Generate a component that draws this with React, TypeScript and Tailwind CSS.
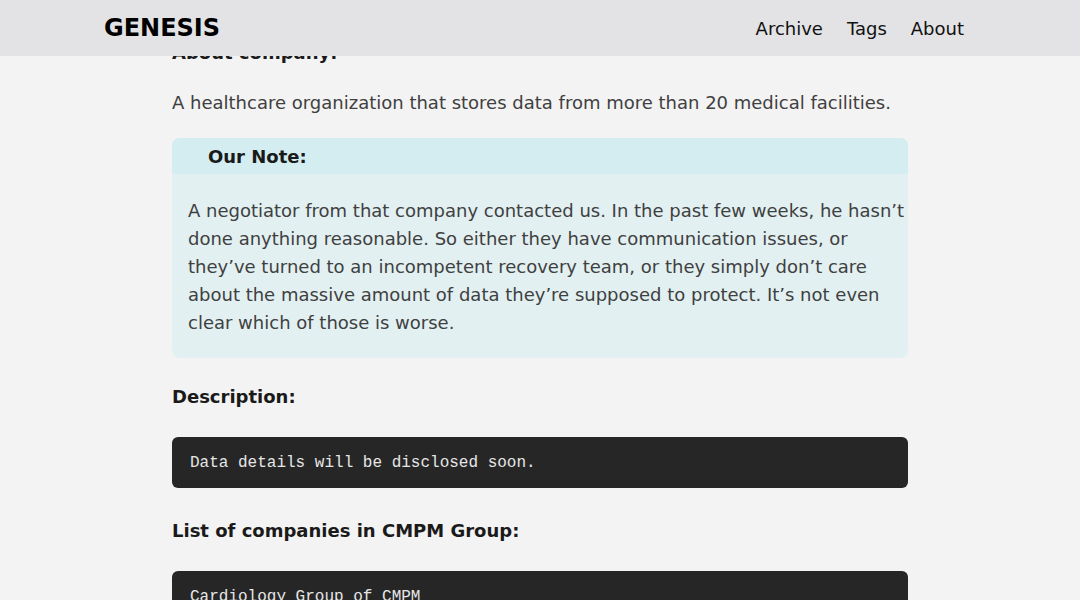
import React from 'react';

const noteLines = [
  'A negotiator from that company contacted us. In the past few weeks, he hasn\u2019t',
  'done anything reasonable. So either they have communication issues, or',
  'they\u2019ve turned to an incompetent recovery team, or they simply don\u2019t care',
  'about the massive amount of data they\u2019re supposed to protect. It\u2019s not even',
  'clear which of those is worse.',
];

const App: React.FC = () => {
  return (
    <div className="relative h-[600px] overflow-hidden bg-[#f3f3f3] font-['DejaVu_Sans',sans-serif]">
      {/* fixed header over the scrolled content */}
      <header className="absolute top-0 left-0 right-0 z-10 h-14 bg-[#e3e3e5]">
        <div className="ml-[104px] flex h-full w-[860px] items-center justify-between">
          <span className="text-[24px] font-bold text-black leading-none">GENESIS</span>
          <nav className="flex gap-6 text-[18px] text-[#111]">
            <span>Archive</span>
            <span>Tags</span>
            <span>About</span>
          </nav>
        </div>
      </header>

      <main className="mx-auto w-[736px] pt-[39px] text-[18px] leading-[28px]">
        <h3 className="font-bold text-[#1a1a1a]">About company:</h3>
        <p className="mt-[22px] text-[#404040]">
          A healthcare organization that stores data from more than 20 medical facilities.
        </p>

        <div className="mt-[21px] overflow-hidden rounded-lg bg-[#e2f0f2]">
          <div className="flex h-9 items-center bg-[#d3edf0] pl-9 pt-px font-bold text-[#1a1a1a]">Our Note:</div>
          <p className="pt-[23px] pb-[21px] pl-4 pr-1 text-[#404040] whitespace-nowrap">
            {noteLines.map((l, i) => (
              <span key={i} className="block">{l}</span>
            ))}
          </p>
        </div>

        <h3 className="mt-[25px] font-bold text-[#1a1a1a]">Description:</h3>
        <pre className="mt-[26px] rounded-md bg-[#262626] px-[18px] pt-[17px] pb-[15px] font-['Liberation_Mono',monospace] text-[16px] leading-[19px] text-[#e6e6e6]">
          Data details will be disclosed soon.
        </pre>

        <h3 className="mt-[29px] font-bold text-[#1a1a1a]">List of companies in CMPM Group:</h3>
        <pre className="mt-[26px] rounded-md bg-[#262626] px-[18px] pt-[17px] pb-[15px] font-['Liberation_Mono',monospace] text-[16px] leading-[19px] text-[#e6e6e6]">
          {'Cardiology Group of CMPM\nCMPM Medical Group\nCMPM Health'}
        </pre>
      </main>
    </div>
  );
};

export default App;
